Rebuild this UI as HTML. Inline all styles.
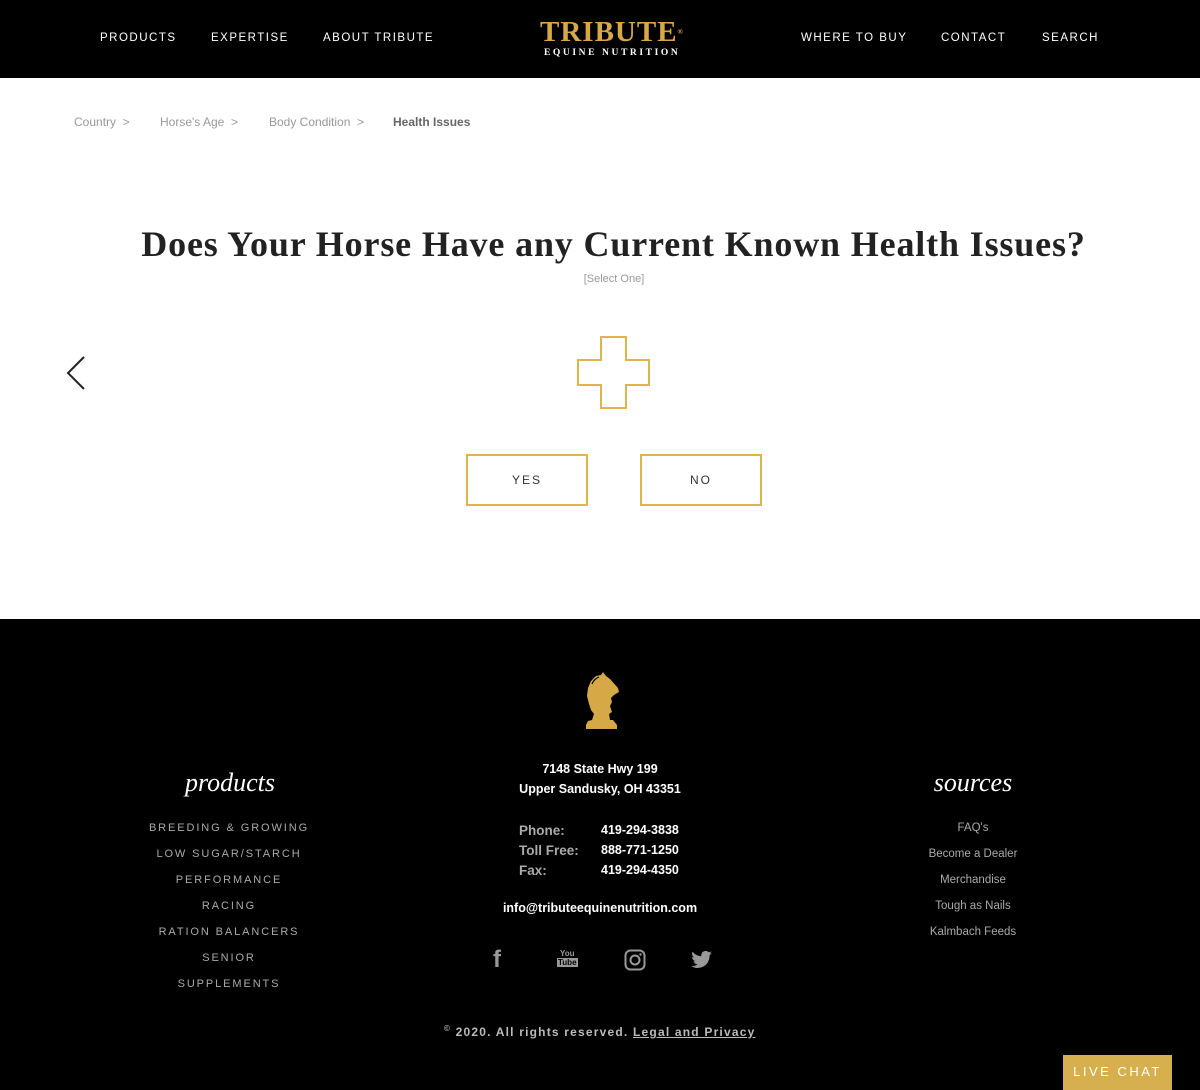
<!DOCTYPE html>
<html><head><style>
*{margin:0;padding:0;box-sizing:border-box}
body{width:1200px;height:1090px;background:#fff;font-family:"Liberation Sans",sans-serif;position:relative;overflow:hidden}
.a{position:absolute;white-space:nowrap}
.hdr{position:absolute;left:0;top:0;width:1200px;height:78px;background:#000}
.nav{color:#fff;font-size:11.5px;letter-spacing:1.5px;top:32px}
.bc{font-size:12px;color:#999;top:115px}
.ft{position:absolute;left:0;top:619px;width:1200px;height:471px;background:#000}
.pl{color:#aaa;font-size:11px;letter-spacing:1.9px;width:300px;text-align:center;left:79px}
.sl{color:#aaa;font-size:11.5px;width:200px;text-align:center;left:873px}
.w{color:#fff;font-weight:bold;font-size:12.5px}
.g{color:#aaa;font-weight:bold;font-size:13.5px}
.btn{position:absolute;top:454px;width:122px;height:52px;border:2px solid #e0b44a;font-size:12px;letter-spacing:2px;text-align:center;line-height:48px;color:#333}
</style></head><body>
<div class="hdr"></div>
<div class="a nav" style="left:100px">PRODUCTS</div>
<div class="a nav" style="left:211px">EXPERTISE</div>
<div class="a nav" style="left:323px">ABOUT TRIBUTE</div>
<div class="a nav" style="left:801px">WHERE TO BUY</div>
<div class="a nav" style="left:941px">CONTACT</div>
<div class="a nav" style="left:1042px">SEARCH</div>
<div class="a" style="left:540px;top:17px;font-family:'Liberation Serif',serif;font-weight:bold;font-size:29px;color:#d6a846;letter-spacing:1px;line-height:30px">TRIBUTE<span style="font-size:7px;vertical-align:top">®</span></div>
<div class="a" style="left:544px;top:48px;font-family:'Liberation Serif',serif;font-size:9.5px;color:#fff;letter-spacing:2.6px;font-weight:bold">EQUINE NUTRITION</div>

<div class="a bc" style="left:74px">Country &nbsp;&gt;</div>
<div class="a bc" style="left:160px">Horse's Age &nbsp;&gt;</div>
<div class="a bc" style="left:269px">Body Condition &nbsp;&gt;</div>
<div class="a bc" style="left:393px;color:#666;font-weight:bold">Health Issues</div>

<div class="a" style="left:0;width:1227px;text-align:center;top:223px;font-family:'Liberation Serif',serif;font-weight:bold;font-size:36px;color:#222;letter-spacing:0.85px">Does Your Horse Have any Current Known Health Issues?</div>
<div class="a" style="left:0;width:1228px;text-align:center;top:273px;font-size:11px;color:#999">[Select One]</div>

<svg class="a" style="left:62px;top:355px" width="26" height="38"><path d="M22 2 L6 18 L22 34" fill="none" stroke="#222" stroke-width="2"/></svg>
<svg class="a" style="left:577px;top:336px" width="74" height="74"><path d="M24 1H49V24H72V49H49V72H24V49H1V24H24Z" fill="none" stroke="#e0b44a" stroke-width="2"/></svg>
<div class="btn" style="left:466px">YES</div>
<div class="btn" style="left:640px">NO</div>

<div class="ft"></div>
<svg class="a" style="left:582px;top:670px" width="38" height="60"><path d="M4 59H35V55L31 50H28L27 44 30 42 28 36 30 32 29 28 32 25 37 22 36 18 28 9 24 6 21 2 19 5 14 6 9 11 6 18 5 26 7 34 9 40 12 44 10 50 6 51 4 55Z" fill="#d6a846"/><path d="M10 14 Q12 9 17 7" fill="none" stroke="#000" stroke-width="1.2"/></svg>
<div class="a" style="left:130px;width:200px;text-align:center;top:768px;font-family:'Liberation Serif',serif;font-style:italic;font-size:26px;color:#fff">products</div>
<div class="a" style="left:873px;width:200px;text-align:center;top:768px;font-family:'Liberation Serif',serif;font-style:italic;font-size:26px;color:#fff">sources</div>
<div class="a pl" style="top:822px">BREEDING &amp; GROWING</div>
<div class="a pl" style="top:848px">LOW SUGAR/STARCH</div>
<div class="a pl" style="top:874px">PERFORMANCE</div>
<div class="a pl" style="top:900px">RACING</div>
<div class="a pl" style="top:926px">RATION BALANCERS</div>
<div class="a pl" style="top:952px">SENIOR</div>
<div class="a pl" style="top:978px">SUPPLEMENTS</div>
<div class="a sl" style="top:822px">FAQ's</div>
<div class="a sl" style="top:848px">Become a Dealer</div>
<div class="a sl" style="top:874px">Merchandise</div>
<div class="a sl" style="top:900px">Tough as Nails</div>
<div class="a sl" style="top:926px">Kalmbach Feeds</div>
<div class="a w" style="left:500px;width:200px;text-align:center;top:762px">7148 State Hwy 199</div>
<div class="a w" style="left:500px;width:200px;text-align:center;top:782px">Upper Sandusky, OH 43351</div>
<div class="a g" style="left:519px;top:823px">Phone:</div>
<div class="a g" style="left:519px;top:843px">Toll Free:</div>
<div class="a g" style="left:519px;top:863px">Fax:</div>
<div class="a w" style="left:601px;top:823px">419-294-3838</div>
<div class="a w" style="left:601px;top:843px">888-771-1250</div>
<div class="a w" style="left:601px;top:863px">419-294-4350</div>
<div class="a w" style="left:500px;width:200px;text-align:center;top:901px">info@tributeequinenutrition.com</div>
<div class="a" style="left:493px;top:946px;color:#999;font-size:24px;font-weight:bold">f</div>
<div class="a" style="left:557px;top:949px;color:#999;font-size:8px;font-weight:bold;line-height:9px;text-align:center">You<br><span style="background:#999;color:#000;padding:0 1px">Tube</span></div>
<svg class="a" style="left:624px;top:949px" width="22" height="22"><rect x="1.5" y="1.5" width="19" height="19" rx="5" fill="none" stroke="#999" stroke-width="2"/><circle cx="11" cy="11" r="4.5" fill="none" stroke="#999" stroke-width="2"/><circle cx="16.5" cy="5.5" r="1.2" fill="#999"/></svg>
<svg class="a" style="left:691px;top:951px" width="22" height="18"><path d="M21 2c-.8.4-1.6.6-2.5.7.9-.5 1.6-1.4 1.9-2.4-.8.5-1.8.9-2.7 1A4.3 4.3 0 0 0 10.4 5.2 12 12 0 0 1 1.6.7a4.3 4.3 0 0 0 1.3 5.7c-.7 0-1.4-.2-1.9-.5 0 2.1 1.5 3.8 3.4 4.2-.6.2-1.3.2-1.9.1.5 1.7 2.1 2.9 4 3A8.6 8.6 0 0 1 0 15a12 12 0 0 0 18.6-10.7c.9-.6 1.6-1.4 2.4-2.3z" fill="#999"/></svg>
<div class="a" style="left:444px;top:1024px;color:#bbb;font-size:12px;letter-spacing:1.2px;font-weight:bold"><sup style="font-size:8px">©</sup> 2020. All rights reserved. <u>Legal and Privacy</u></div>
<div class="a" style="left:1063px;top:1055px;width:109px;height:35px;background:#d6b04e;color:#fff;font-size:13px;letter-spacing:2.5px;text-align:center;line-height:34px">LIVE CHAT</div>
</body></html>
